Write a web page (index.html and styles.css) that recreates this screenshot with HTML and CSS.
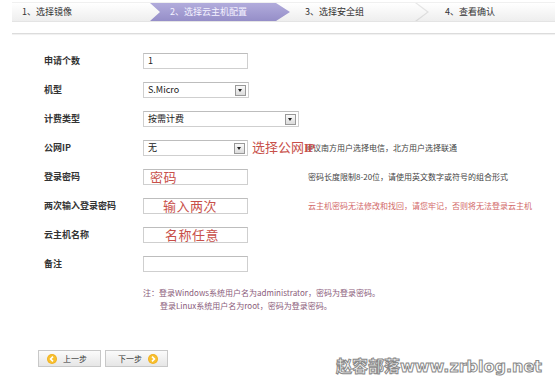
FILE: index.html
```html
<!DOCTYPE html>
<html>
<head>
<meta charset="utf-8">
<link rel="stylesheet" href="styles.css">
</head>
<body>
<div class="page">
  <div class="steps">
    <div class="step s1">1、选择镜像</div>
    <div class="step s2 active">2、选择云主机配置</div>
    <div class="step s3">3、选择安全组</div>
    <div class="step s4">4、查看确认</div>
  </div>
  <div class="sep"></div>
  <div class="form">
    <div class="row">
      <div class="label">申请个数</div>
      <div class="ctrl"><div class="box w105"><span class="val">1</span></div></div>
    </div>
    <div class="row">
      <div class="label">机型</div>
      <div class="ctrl"><div class="box w106 sel"><span class="val">S.Micro</span><span class="arr"></span></div></div>
    </div>
    <div class="row">
      <div class="label">计费类型</div>
      <div class="ctrl"><div class="box w156 sel"><span class="val">按需计费</span><span class="arr"></span></div></div>
    </div>
    <div class="row">
      <div class="label">公网IP</div>
      <div class="ctrl"><div class="box w105 sel"><span class="val">无</span><span class="arr"></span></div></div>
      <div class="hint">建议南方用户选择电信，北方用户选择联通</div>
      <span class="mark ipmark">选择公网<span class="ip">IP</span></span>
    </div>
    <div class="row">
      <div class="label">登录密码</div>
      <div class="ctrl"><div class="box w105"><span class="note-red p6">密码</span></div></div>
      <div class="hint h2">密码长度限制8-20位，请使用英文数字或符号的组合形式</div>
    </div>
    <div class="row">
      <div class="label">两次输入登录密码</div>
      <div class="ctrl"><div class="box w105"><span class="note-red p19">输入两次</span></div></div>
      <div class="hint h2 warn">云主机密码无法修改和找回，请您牢记，否则将无法登录云主机</div>
    </div>
    <div class="row">
      <div class="label">云主机名称</div>
      <div class="ctrl"><div class="box w105"><span class="note-red p21">名称任意</span></div></div>
    </div>
    <div class="row">
      <div class="label">备注</div>
      <div class="ctrl"><div class="box w105"></div></div>
    </div>
  </div>
  <div class="notes">
    <div>注：登录Windows系统用户名为administrator，密码为登录密码。</div>
    <div class="indent">登录Linux系统用户名为root，密码为登录密码。</div>
  </div>
  <div class="buttons">
    <div class="btn"><span class="ico"><svg width="10" height="10" viewBox="0 0 10 10"><circle cx="5" cy="5" r="5" fill="#f0b020"/><circle cx="5" cy="5" r="4" fill="#f7c030"/><path d="M6 2.6 L3.6 5 L6 7.4" stroke="#fff" stroke-width="1.6" fill="none"/></svg></span>上一步</div>
    <div class="btn next">下一步<span class="ico"><svg width="10" height="10" viewBox="0 0 10 10"><circle cx="5" cy="5" r="5" fill="#f0b020"/><circle cx="5" cy="5" r="4" fill="#f7c030"/><path d="M4 2.6 L6.4 5 L4 7.4" stroke="#fff" stroke-width="1.6" fill="none"/></svg></span></div>
  </div>
  <div class="watermark">赵容部落www.zrblog.net</div>
</div>
</body>
</html>
```
FILE: styles.css
```css
html, body { margin: 0; padding: 0; background: #fff; }
body {
  width: 555px; height: 376px; overflow: hidden;
  font-family: "Noto Sans CJK SC", "DejaVu Sans", sans-serif;
  color: #333;
}
.page { position: relative; height: 376px; }
.steps {
  display: flex; margin: 2px 0 0 12px; height: 18px;
  background: linear-gradient(#ffffff, #eeeeee);
  border-top: 1px solid #f0f0f0;
  border-bottom: 1px solid #e4e4e4;
}
.step { font-size: 9px; line-height: 18px; color: #333; white-space: nowrap; position: relative; box-sizing: border-box; flex: none; }
.s1 { width: 140px; padding-left: 10px; }
.s2 {
  width: 140px; padding-left: 20px;
  background: linear-gradient(#b2acdc, #958ec8);
  color: #f4f2ff;
  clip-path: polygon(0 0, 126px 0, 140px 50%, 126px 100%, 0 100%, 10px 50%);
  margin-left: -2px;
}
.s3 { width: 137px; padding-left: 15px; }
.s3::after {
  content: ""; position: absolute; right: -2px; top: 0; width: 14px; height: 18px;
  background: linear-gradient(#e8e8e8, #d8d8d8);
  clip-path: polygon(0 0, 2px 0, 14px 50%, 2px 100%, 0 100%, 12px 50%);
}
.s4 { padding-left: 18px; }
.sep {
  margin: 11px 0 0 12px; height: 1px; background: #dcdcdc;
  box-shadow: 0 1px 1px #eee;
}
.form { margin-top: 12px; }
.row { display: flex; align-items: center; height: 29px; position: relative; }
.label { width: 99px; padding-left: 44px; font-size: 9px; font-weight: bold; color: #333; }
.ctrl { width: 162px; }
.box {
  height: 14px; border: 1px solid #cfcfcf; border-top-color: #bdbdbd; background: #fff;
  display: flex; align-items: center; position: relative; box-sizing: content-box;
}
.w105 { width: 103px; }
.w106 { width: 104px; }
.w156 { width: 154px; }
.val { font-size: 9px; padding-left: 4px; color: #222; }
.sel .arr {
  position: absolute; right: 2px; top: 2px; width: 9px; height: 9px;
  border: 1px solid #999; background: linear-gradient(#fafafa, #dcdcdc);
}
.sel .arr::after {
  content: ""; position: absolute; left: 2px; top: 3px;
  border-left: 2.5px solid transparent; border-right: 2.5px solid transparent; border-top: 3px solid #222;
}
.note-red { font-size: 13px; color: #c8504a; line-height: 14px; letter-spacing: 0.5px; }
.p6 { padding-left: 6px; }
.p19 { padding-left: 19px; }
.p21 { padding-left: 21px; }
.hint { font-size: 8px; color: #444; white-space: nowrap; }
.h2 { margin-left: 3px; }
.warn { color: #d26868; }
.mark { position: absolute; }
.ipmark { left: 252px; top: 6px; font-size: 13px; line-height: 16px; color: #c8504a; }
.ip { font-family: "Liberation Serif", serif; font-weight: bold; font-size: 12px; letter-spacing: -1px; }
.notes { margin: 8px 0 0 143px; font-size: 8px; color: #8a5c7a; line-height: 13px; }
.indent { padding-left: 17px; }
.buttons { display: flex; gap: 4px; margin: 38px 0 0 38px; }
.btn {
  height: 15px; border: 1px solid #c8c8c8; background: linear-gradient(#fbfbfb, #e6e6e6);
  font-size: 8px; display: flex; align-items: center; gap: 6px; padding-left: 8px; box-sizing: content-box;
  width: 53px;
}
.btn.next { padding-left: 12px; width: 49px; }
.ico { display: flex; }
.watermark {
  position: absolute; left: 336px; top: 351px;
  font-family: "DejaVu Sans", "Noto Sans CJK SC", sans-serif; font-weight: bold; font-size: 16px;
  color: #fff; -webkit-text-stroke: 1px #888; letter-spacing: 0;
}
```
